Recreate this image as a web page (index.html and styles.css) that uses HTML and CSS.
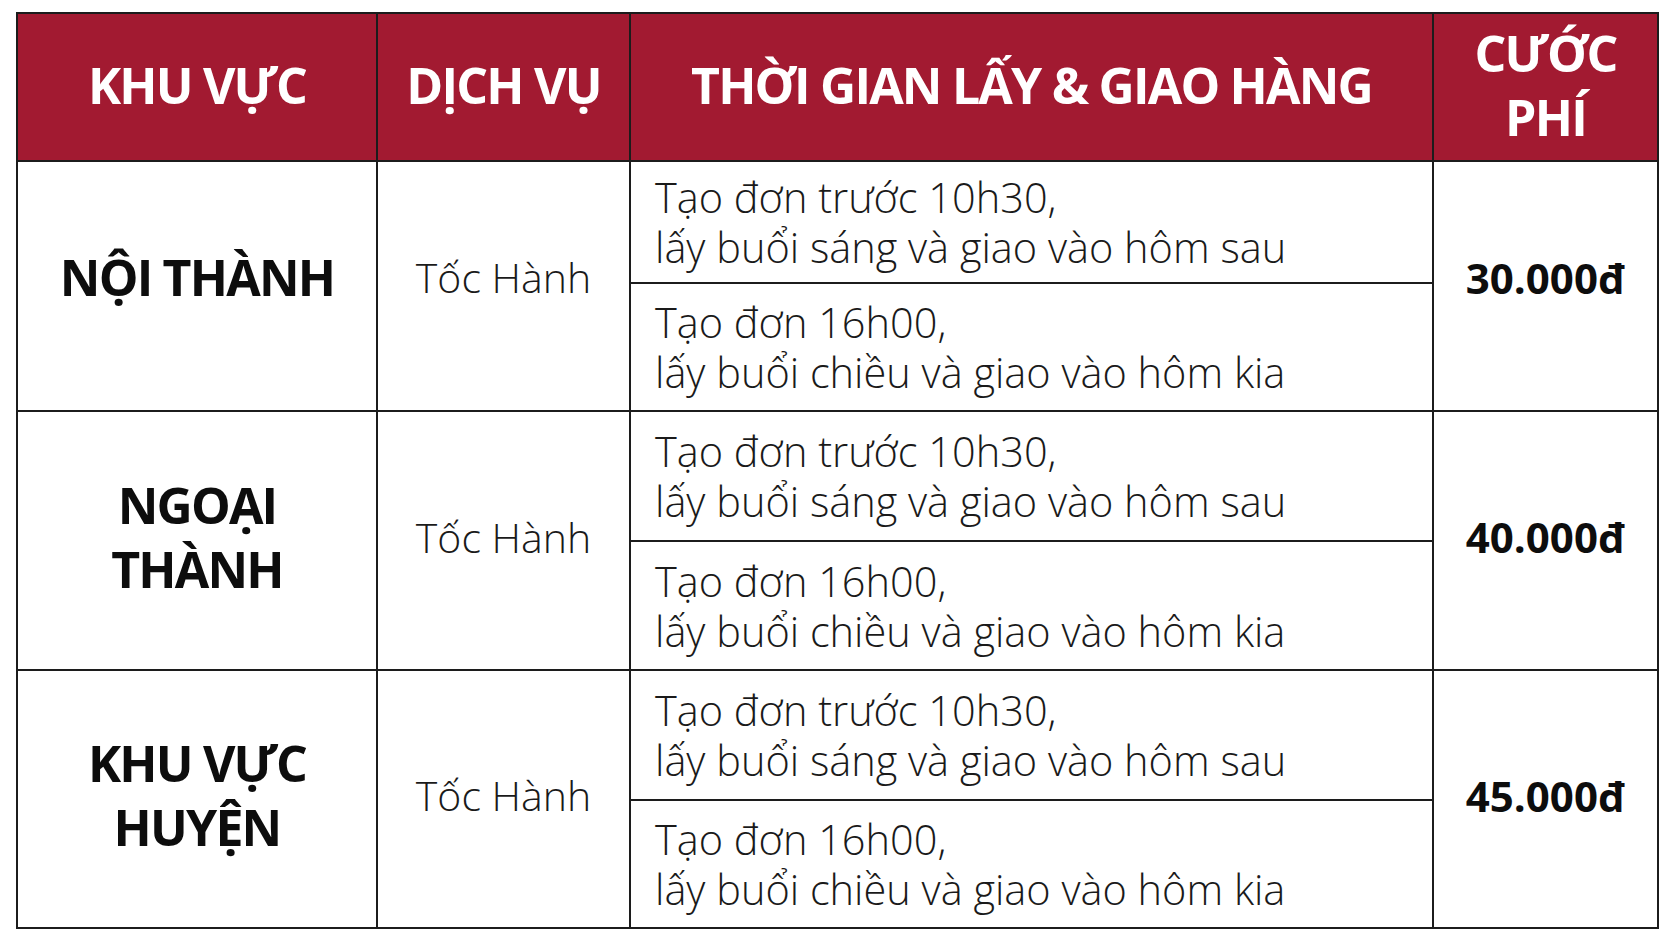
FILE: index.html
```html
<!DOCTYPE html>
<html lang="vi">
<head>
<meta charset="utf-8">
<title>Bảng cước</title>
<link rel="stylesheet" href="styles.css">
</head>
<body>
<div class="page">
  <div class="table">
    <div class="cell head">KHU VỰC</div>
    <div class="cell head">DỊCH VỤ</div>
    <div class="cell head">THỜI GIAN LẤY &amp; GIAO HÀNG</div>
    <div class="cell head">CƯỚC<br>PHÍ</div>

    <div class="cell area span2 lift">NỘI THÀNH</div>
    <div class="cell service span2 lift">Tốc Hành</div>
    <div class="cell time">Tạo đơn trước 10h30,<br>lấy buổi sáng và giao vào hôm sau</div>
    <div class="cell price span2 lift">30.000đ</div>
    <div class="cell time">Tạo đơn 16h00,<br>lấy buổi chiều và giao vào hôm kia</div>

    <div class="cell area span2">NGOẠI<br>THÀNH</div>
    <div class="cell service span2">Tốc Hành</div>
    <div class="cell time">Tạo đơn trước 10h30,<br>lấy buổi sáng và giao vào hôm sau</div>
    <div class="cell price span2">40.000đ</div>
    <div class="cell time">Tạo đơn 16h00,<br>lấy buổi chiều và giao vào hôm kia</div>

    <div class="cell area span2">KHU VỰC<br>HUYỆN</div>
    <div class="cell service span2">Tốc Hành</div>
    <div class="cell time">Tạo đơn trước 10h30,<br>lấy buổi sáng và giao vào hôm sau</div>
    <div class="cell price span2">45.000đ</div>
    <div class="cell time">Tạo đơn 16h00,<br>lấy buổi chiều và giao vào hôm kia</div>
  </div>
</div>
</body>
</html>
```

FILE: styles.css
```css
html, body {
  margin: 0;
  padding: 0;
  background: #ffffff;
}

.page {
  padding: 12px 0 0 16px;
  font-family: "Open Sans", "Noto Sans", sans-serif;
  color: #111111;
}

.table {
  display: grid;
  grid-template-columns: 360px 253px 803px 225px;
  grid-template-rows: 148px 122px 128px 130px 129px 130px 128px;
  width: max-content;
  border-top: 2px solid #1c1c1c;
  border-left: 2px solid #1c1c1c;
}

.cell {
  box-sizing: border-box;
  border-right: 2px solid #1c1c1c;
  border-bottom: 2px solid #1c1c1c;
  display: flex;
  align-items: center;
  justify-content: center;
  text-align: center;
}

.span2 {
  grid-row: span 2;
  padding-bottom: 8px;
}

.span2.lift {
  padding-bottom: 18px;
}

.head {
  background: #a21a31;
  color: #ffffff;
  font-weight: 700;
  font-size: 50px;
  letter-spacing: -1.8px;
  line-height: 64px;
  padding-bottom: 4px;
}

.area {
  font-weight: 700;
  font-size: 50px;
  letter-spacing: -1.8px;
  line-height: 64px;
  color: #0d0d0d;
}

.service {
  font-weight: 300;
  font-size: 41px;
  color: #1a1a1a;
}

.time {
  justify-content: flex-start;
  text-align: left;
  padding-left: 24px;
  font-weight: 300;
  font-size: 41.5px;
  line-height: 50px;
  color: #1a1a1a;
}

.price {
  font-weight: 700;
  font-size: 42px;
  color: #0d0d0d;
}
```
